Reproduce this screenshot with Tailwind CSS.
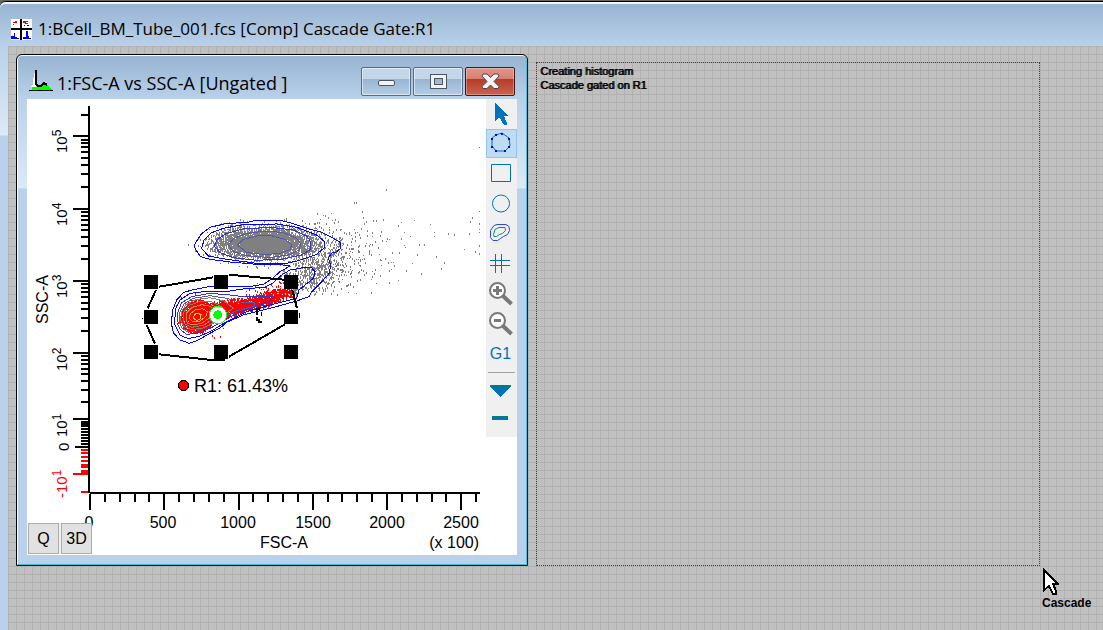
<!doctype html>
<html lang="en">
    <head>
        <meta charset="UTF-8" />
        <meta name="viewport" content="width=device-width, initial-scale=1.0" />
        <title>1:BCell_BM_Tube_001.fcs</title>
        <script src="https://cdn.jsdelivr.net/npm/@tailwindcss/browser@4"></script>
    </head>
    <body
        class="min-h-screen flex flex-col overflow-hidden bg-[#646464] pt-px font-['Liberation_Sans',Arial,sans-serif] text-black"
    >
        <main
            class="flex-1 flex flex-col rounded-tl-md border-t border-black bg-[linear-gradient(#b9d1ea_44px,#dce9f7_133px,#b9d1ea_134px)]"
        >
            <header
                class="h-11 shrink-0 flex items-center gap-1.5 pl-[11px] pt-2 rounded-tl-md border-t-2 border-[#f2f7fc] bg-linear-to-b from-[#98b4d2] to-[#b9d1ea]"
            >
                <svg class="size-[21px] shrink-0" viewBox="0 0 21 21" shape-rendering="crispEdges">
                    <path fill="#fff" d="M0 0h21v21H0z" />
                    <path fill="#000" d="M9 0h2v21H9zM0 9h21v2H0z" />
                    <path fill="#e00" d="M2 3h2v1H2zM4 2h2v2H4zM2 5h1v1H2zM12 2h3v2h-3zM14 4h3v1h-3zM15 2h2v1h-2z" />
                    <path fill="#00f" d="M1 17h2v-3h1v4h2v1h2v1H0v-3zM15 12h2v5h1v2h2v1h-8v-2h3zM13 6h1v1h-1zM16 6h2v1h-2z" />
                </svg>
                <h1 class="font-['Open_Sans',sans-serif] text-[17px] leading-6 whitespace-nowrap">
                    1:BCell_BM_Tube_001.fcs [Comp] Cascade Gate:R1
                </h1>
            </header>

            <div
                class="relative flex-1 ml-2 bg-[#c0c0c0] bg-[linear-gradient(#b1b1b1_1px,transparent_1px),linear-gradient(90deg,#b1b1b1_1px,transparent_1px)] bg-size-[8px_8px]"
            >
                <section class="absolute left-2 top-2 size-[512px] rounded-t-md border border-black">
                    <div
                        class="h-full flex flex-col rounded-t-md border border-t-white border-l-white border-r-[#33c8ee] border-b-[#2fc5dc] bg-[linear-gradient(#b9d1ea_43px,#dce9f7_132px,#b9d1ea_133px)]"
                    >
                        <header
                            class="h-[43px] shrink-0 flex items-start rounded-t-sm bg-linear-to-b from-[#98b4d2] to-[#b9d1ea] pl-[11px] pr-[11px] pt-[11px]"
                        >
                            <svg class="mt-[3px] mr-1 w-6 h-[21px]" viewBox="0 0 24 21" shape-rendering="crispEdges">
                                <path fill="#fff" d="M5 3h2v14H2l2-3z" />
                                <path fill="#0f0" d="M3 20v-3h6l3-3 4-1 3 3 4 4z" />
                                <path fill="none" stroke="#000" stroke-width="2" d="M7 0v14l2 2h3l3-3 3 2" />
                                <path fill="#000" d="M0 20h24v1H0z" />
                            </svg>
                            <h2 class="font-['Open_Sans',sans-serif] text-lg leading-6 mt-1 flex-1 whitespace-nowrap">
                                1:FSC-A vs SSC-A [Ungated ]
                            </h2>
                            <div class="flex gap-0.5">
                                <button
                                    aria-label="Minimize"
                                    class="w-[50px] h-[29px] flex items-center justify-center rounded-xs border border-[#566c87] inset-ring inset-ring-white/50 bg-[linear-gradient(#c3d7eb_40%,#98b4d2_40%,#b5cde6)]"
                                >
                                    <span class="mt-0.5 w-[17px] h-[6px] rounded-xs border border-[#4d5464] bg-[#f4f4f4]"></span>
                                </button>
                                <button
                                    aria-label="Maximize"
                                    class="w-[50px] h-[29px] flex items-center justify-center rounded-xs border border-[#566c87] inset-ring inset-ring-white/50 bg-[linear-gradient(#c3d7eb_40%,#98b4d2_40%,#b5cde6)]"
                                >
                                    <svg class="size-[17px]" viewBox="0 0 17 17" shape-rendering="crispEdges">
                                        <path fill="#f2f2f2" stroke="#4d5464" fill-rule="evenodd" d="M.5 1.5h16v14H.5zM4.500 5.500v6h8v-6z" />
                                    </svg>
                                </button>
                                <button
                                    aria-label="Close"
                                    class="w-[50px] h-[29px] flex items-center justify-center rounded-xs border border-[#45161c] inset-ring inset-ring-white/30 bg-[linear-gradient(#e2968b_0%,#d97f70_40%,#b63b27_41%,#c96450)]"
                                >
                                    <svg class="w-[19px] h-[17px]" viewBox="0 0 19 17">
                                        <path
                                            fill="#f2f2f2"
                                            stroke="#4d4450"
                                            stroke-linejoin="round"
                                            d="M2 1h4l3.500 3.500L13 1h4l1 2-5 5.500 5 5-1 2h-4L9.500 12 6 15.500H2l-1-2 5-5L1 3z"
                                        />
                                    </svg>
                                </button>
                            </div>
                        </header>

                        <div class="relative flex-1 flex items-start mx-[9px] mb-[9px] bg-white">
                            <svg
                                id="plot"
                                class="w-[459px] h-[456px] shrink-0"
                                viewBox="27 99 459 456"
                                font-size="16"
                                shape-rendering="crispEdges"
                                role="img"
                                aria-label="FSC-A vs SSC-A"
                            >
                                <!-- axes, ticks are filled in below -->
                                <path d="M89 106V493M90 493H480" fill="none" stroke="#000" stroke-width="2" />
                                <path id="ticks" fill="none" stroke="#000" stroke-width="2" />
                                <path id="negTicks" fill="none" stroke="#f00" stroke-width="2" />
                                <path d="M81 424.500H88" stroke="#000" stroke-width="5" />
                                <path d="M81 466H88M81 472H88" stroke="#f00" stroke-width="4" />

                                <g text-anchor="middle">
                                    <text x="89" y="528">0</text>
                                    <text x="163" y="528">500</text>
                                    <text x="238" y="528">1000</text>
                                    <text x="313" y="528">1500</text>
                                    <text x="387" y="528">2000</text>
                                    <text x="461" y="528">2500</text>
                                    <text x="284" y="548">FSC-A</text>
                                </g>
                                <text x="479" y="548" text-anchor="end">(x 100)</text>
                                <text transform="translate(48 324) rotate(-90)">SSC-A</text>
                                <g font-size="15">
                                    <text transform="translate(67 153) rotate(-90)">10<tspan dy="-6" font-size="12">5</tspan></text>
                                    <text transform="translate(67 226) rotate(-90)">10<tspan dy="-6" font-size="12">4</tspan></text>
                                    <text transform="translate(67 298) rotate(-90)">10<tspan dy="-6" font-size="12">3</tspan></text>
                                    <text transform="translate(67 371) rotate(-90)">10<tspan dy="-6" font-size="12">2</tspan></text>
                                    <text transform="translate(67 437) rotate(-90)">10<tspan dy="-6" font-size="12">1</tspan></text>
                                    <text transform="translate(69 451) rotate(-90)">0</text>
                                    <text fill="#f00" transform="translate(67 498) rotate(-90)">-10<tspan dy="-6" font-size="12">1</tspan></text>
                                </g>

                                <path id="grayDots" fill="#808080" />
                                <path id="redDots" fill="#f00" />

                                <!-- contours and gate use a 3x finer grid -->
                                <svg x="130" y="190" width="220" height="180" viewBox="0 0 660 540" overflow="visible" fill="none" stroke-width="3">
                                    <g stroke="#0000ff">
                                        <path
                                            d="M196 178L193 165 205 145 216 130 240 112 290 100 350 98 375 91 450 91 480 98 530 115 570 125 610 145 632 158V175L620 185 604 190 595 205 602 225 598 250 580 270 560 290 545 305 537 320 500 333 420 355 340 375 290 397 270 414 240 430 205 450 178 460 150 450 130 428 124 400 128 360 140 330 160 308 185 300 235 290 350 291 400 283 425 267 450 245 480 228 450 224 380 223 300 216 240 208 212 200z"
                                        />
                                        <path d="M215 175L222 150 245 128 280 115 345 103 440 102 500 112 560 135 584 155V172L560 193 500 213 460 222 380 220 290 208 235 198z" />
                                        <path d="M133 400L138 355 150 330 180 310 240 303 300 303 345 296 405 292 430 278 455 255 480 240 520 233 543 231 555 245 550 265 525 285 507 300 500 325 420 345 350 365 285 397 250 420 210 438 175 446 150 436z" />
                                    </g>
                                    <g stroke="#3333d8">
                                        <path d="M253 168L262 148 290 130 340 117 420 112 490 120 530 138 542 155V178L515 195 460 207 380 211 310 203 270 188z" />
                                        <path d="M141 398L144 365 155 338 185 320 240 310 300 315 350 321 400 320 428 318 424 332 390 345 330 365 285 390 240 415 200 430 170 433 152 420z" />
                                    </g>
                                    <g stroke="#5858a8">
                                        <path d="M295 165L310 146 350 130 410 123 460 128 500 145 512 162 508 180 480 194 420 203 350 197 310 185z" />
                                        <path d="M322 165L340 148 380 138 420 136 465 148 484 162 482 178 450 190 400 194 350 187z" />
                                        <path d="M148 395L150 365 162 342 190 325 240 317 290 325 330 336 375 337 370 350 320 362 280 382 235 408 195 424 170 424 155 414z" />
                                    </g>
                                    <g stroke="#888078">
                                        <path d="M152 392L154 366 167 345 197 329 240 323 283 333 310 355 290 368 255 395 220 414 185 419 161 409z" />
                                        <path d="M159 390L162 365 178 346 208 335 245 335 274 350 277 365 250 387 220 406 185 412 166 403z" />
                                    </g>
                                    <g stroke="#c09030">
                                        <path d="M168 388L171 367 187 352 215 344 242 349 254 362 243 380 215 400 188 405 173 400z" />
                                        <path stroke="#d8b020" d="M178 386L181 371 195 360 218 356 232 365 227 380 210 393 190 396z" />
                                    </g>
                                    <path stroke="#f0d020" d="M190 384L193 374 202 369 213 374 211 386 200 392z" />

                                    <path
                                        stroke="#000"
                                        stroke-width="6"
                                        d="M88 290L250 262M297 254L462 269M487 300L501 355M465 403L297 500M88 493L245 510H285M75 461L50 405M53 355L78 300"
                                    />
                                    <path
                                        fill="#000"
                                        d="M42 255h42v42H42zM252 255h42v42h-42zM462 255h42v42h-42zM42 360h42v42H42zM462 360h42v42h-42zM42 465h42v42H42zM252 465h42v42h-42zM462 465h42v42h-42zM36 384h3v3h-3zM507 369h3v15h-3z"
                                    />
                                    <circle cx="264" cy="375" r="26" fill="#fff" stroke="#0f0" />
                                    <circle cx="263" cy="374" r="13" fill="#0f0" />
                                    <path fill="#000" d="M378 357h6v-6h6v9h-6v15h-6zM393 366h3v12h-3zM378 381h6v6h6v6h6v6h-12v-6h-6z" />
                                </svg>

                                <circle cx="183.500" cy="385.500" r="5" fill="#f00" stroke="#000" />
                                <text x="194" y="392" font-size="18">R1: 61.43%</text>
                            </svg>

                            <nav class="w-[31px] h-[338px] flex flex-col bg-[#f0f0f0] text-[#0072bc]" aria-label="Gate tools">
                                <button aria-label="Select" class="h-[30px]">
                                    <svg class="w-full h-full" viewBox="0 0 31 30" shape-rendering="crispEdges">
                                        <path fill="currentColor" d="M9 4v18l4-4 5 8h3v-2l-3-7h5z" />
                                    </svg>
                                </button>
                                <button aria-label="Polygon gate" class="h-[29px] border border-[#92c6f2] bg-[#c0dcf3]">
                                    <svg class="w-full h-full" viewBox="1 1 29 27">
                                        <path fill="none" stroke="currentColor" d="M10 6l6-2 7 5 1 8-5 5H10l-4-5V9z" />
                                        <path
                                            fill="#00f"
                                            shape-rendering="crispEdges"
                                            d="M9 5h2v2H9zM15 4h2v2h-2zM22 9h2v2h-2zM22 17h2v2h-2zM18 21h2v2h-2zM9 21h2v2H9zM5 17h2v2H5zM5 9h2v2H5z"
                                        />
                                    </svg>
                                </button>
                                <button aria-label="Rectangle gate" class="h-[30px]">
                                    <svg class="w-full h-full" viewBox="0 0 31 30" fill="none" stroke="currentColor">
                                        <path d="M5.500 6.500h19v17h-19z" />
                                    </svg>
                                </button>
                                <button aria-label="Ellipse gate" class="h-[30px]">
                                    <svg class="w-full h-full" viewBox="0 0 31 30" fill="none" stroke="currentColor">
                                        <circle cx="15" cy="15.500" r="8.500" />
                                    </svg>
                                </button>
                                <button aria-label="Contour gate" class="h-[30px]">
                                    <svg class="w-full h-full" viewBox="0 0 31 30" fill="none">
                                        <path stroke="#3344ee" d="M8 7.500l3-1h9l3 2 .5 4-2 4-4 2-3 2-3 2H7l-2.500-3v-7z" />
                                        <path stroke="#00936b" d="M9 11.500l4-2h6l.5 3-3 3-3 1-3 2H8l-.5-2z" />
                                    </svg>
                                </button>
                                <button aria-label="Quadrant gate" class="h-[30px]">
                                    <svg class="w-full h-full" viewBox="0 0 31 30" fill="none" stroke="currentColor">
                                        <path d="M4 12.500h20M4 17.500h20M9.500 6v19M15.500 6v19" />
                                    </svg>
                                </button>
                                <button aria-label="Zoom in" class="h-[30px]">
                                    <svg class="w-full h-full" viewBox="0 0 31 30" fill="none" stroke="#787878">
                                        <circle cx="11.500" cy="12.500" r="7.500" fill="#fff" stroke-width="2" />
                                        <path stroke-width="3" d="M7 12.500h9M11.500 8v9" />
                                        <path stroke-width="4" d="M17 18l8.500 8" />
                                    </svg>
                                </button>
                                <button aria-label="Zoom out" class="h-[30px]">
                                    <svg class="w-full h-full" viewBox="0 0 31 30" fill="none" stroke="#787878">
                                        <circle cx="11.500" cy="12.500" r="7.500" fill="#fff" stroke-width="2" />
                                        <path stroke-width="3" d="M8 12.500h7" />
                                        <path stroke-width="4" d="M17 18l8.500 8" />
                                    </svg>
                                </button>
                                <button class="h-[30px] pr-0.5 pt-0.5 text-base">G1</button>
                                <hr class="mx-0.5 mt-1 border-[#a0a0a0]" />
                                <button aria-label="More tools" class="h-[30px]">
                                    <svg class="w-full h-full" viewBox="0 0 31 30" shape-rendering="crispEdges">
                                        <path fill="currentColor" d="M4 13h21L14.500 24z" />
                                        <path fill="#007f83" d="M4 12h21v2H4z" />
                                    </svg>
                                </button>
                                <button aria-label="Collapse" class="h-[30px]">
                                    <svg class="w-full h-full" viewBox="0 0 31 30" shape-rendering="crispEdges">
                                        <path fill="currentColor" d="M6 15h16v2H6z" />
                                        <path fill="#007f83" d="M6 13h16v2H6z" />
                                    </svg>
                                </button>
                            </nav>

                            <div class="absolute left-px bottom-px flex gap-0.5 bg-[#f0f0f0] text-base">
                                <button class="size-[31px] border border-[#adadad] bg-[#e1e1e1]">Q</button>
                                <button class="size-[31px] border border-[#adadad] bg-[#e1e1e1]">3D</button>
                            </div>
                        </div>
                    </div>
                </section>

                <section
                    class="absolute left-[528px] top-4 w-[504px] h-[504px] border border-dotted border-[#404040] pl-[3px] pt-px text-[11px] leading-[14px] text-shadow-[1px_0_#000]"
                >
                    <p>Creating histogram</p>
                    <p>Cascade gated on R1</p>
                </section>

                <!-- drag cursor -->
                <div class="absolute left-[1034px] top-[521px] text-xs leading-4 font-bold">
                    <svg class="w-[17px] h-[28px]" viewBox="0 0 17 28" shape-rendering="crispEdges">
                        <path
                            fill="#fff"
                            stroke="#000"
                            stroke-width="2"
                            d="M2 3v20l5-4 4 8h3v-3l-3-7h5z"
                        />
                    </svg>
                    <p>Cascade</p>
                </div>
            </div>
        </main>

        <script>
            let seed = 7;
            const rnd = () => {
                seed = (seed * 1664525 + 1013904223) % 4294967296;
                return seed / 4294967296;
            };
            const gauss = () =>
                Math.sqrt(-2 * Math.log(rnd() + 1e-9)) * Math.cos(6.2832 * rnd());

            const setPath = (id, d) =>
                document.getElementById(id).setAttribute("d", d);

            // axis ticks
            let ticks = "";
            [136, 209, 281, 353, 419].forEach((y) => (ticks += `M73 ${y}H88`));
            ticks += "M75 447H88";
            [
                115, 140, 143, 147, 152, 158, 165, 174, 187, 212, 216, 220, 225,
                230, 237, 246, 259, 284, 288, 292, 297, 303, 309, 318, 331, 356,
                360, 364, 369, 374, 381, 390, 402, 422, 429, 432, 435, 438, 441,
                444,
            ].forEach((y) => (ticks += `M81 ${y}H88`));
            for (let i = 0; i <= 26; i++) {
                const x = Math.round(90 + i * 14.85);
                ticks += `M${x} 494V${i % 5 ? 502 : 510}`;
            }
            setPath("ticks", ticks);
            setPath(
                "negTicks",
                "M73 474H88M81 450H88M81 453H88M81 457H88M81 461H88M81 492H88",
            );

            // R1 gate
            const gate = [
                [156, 287],
                [229, 275],
                [291, 281],
                [299, 317],
                [225, 360],
                [212, 360],
                [157, 354],
                [144, 318],
            ];
            const inGate = (x, y) => {
                let hit = false;
                for (let i = 0, j = gate.length - 1; i < gate.length; j = i++) {
                    const [xi, yi] = gate[i];
                    const [xj, yj] = gate[j];
                    if (yi > y !== yj > y && x < ((xj - xi) * (y - yi)) / (yj - yi) + xi)
                        hit = !hit;
                }
                return hit;
            };

            let gray = "";
            let red = "";
            const dot = (x, y) => {
                x = Math.round(x);
                y = Math.round(y);
                if (x > 479) return;
                const d = `M${x} ${y}h1v${rnd() < 0.7 ? 2 : 1}h-1z`;
                if (inGate(x, y)) red += d;
                else gray += d;
            };
            // gaussian cloud, points further out than `max` sigmas are dropped
            const cloud = (n, cx, cy, sx, sy, slope = 0, max = 3) => {
                for (let i = 0; i < n; i++) {
                    const gx = gauss();
                    const gy = gauss();
                    if (Math.hypot(gx, gy) > max) continue;
                    dot(cx + gx * sx, cy + gy * sy + gx * sx * slope);
                }
            };

            cloud(3800, 264, 242, 26, 8, 0, 2.3);
            cloud(1600, 264, 242, 24, 7, 0, 1.3);
            cloud(480, 266, 242, 36, 12, 0, 2.2);
            cloud(520, 312, 270, 15, 12, -0.3, 2.4);
            cloud(330, 328, 254, 20, 18, 0, 2.4);
            cloud(110, 355, 255, 26, 18, 0, 2.4);
            cloud(3200, 197, 316, 9, 9, -0.1, 1.9);
            cloud(90, 199, 318, 12, 13, 0, 2.3);
            cloud(1500, 222, 309, 15, 5, -0.2, 2);
            cloud(1200, 262, 300, 19, 4, -0.3, 2);
            cloud(150, 268, 293, 18, 6, -0.2, 2.2);

            [
                [479, 147], [386, 189], [354, 202], [356, 202], [362, 211],
                [363, 217], [376, 220], [401, 222], [398, 225], [414, 220],
                [430, 224], [434, 232], [434, 236], [448, 233], [454, 234],
                [469, 233], [470, 221], [472, 217], [479, 211], [479, 223],
                [479, 229], [479, 232], [479, 245], [479, 253], [475, 251],
                [464, 249], [436, 256], [444, 262], [441, 268], [421, 273],
                [412, 263], [417, 254], [419, 244], [424, 244], [404, 232],
                [410, 236], [401, 238], [399, 252], [406, 270], [398, 280],
                [393, 262], [394, 265], [391, 269], [389, 270], [381, 265],
                [380, 275], [376, 283], [371, 292], [389, 239], [382, 240],
            ].forEach(([x, y]) => dot(x, y));

            setPath("grayDots", gray);
            setPath("redDots", red);
        </script>
    </body>
</html>
